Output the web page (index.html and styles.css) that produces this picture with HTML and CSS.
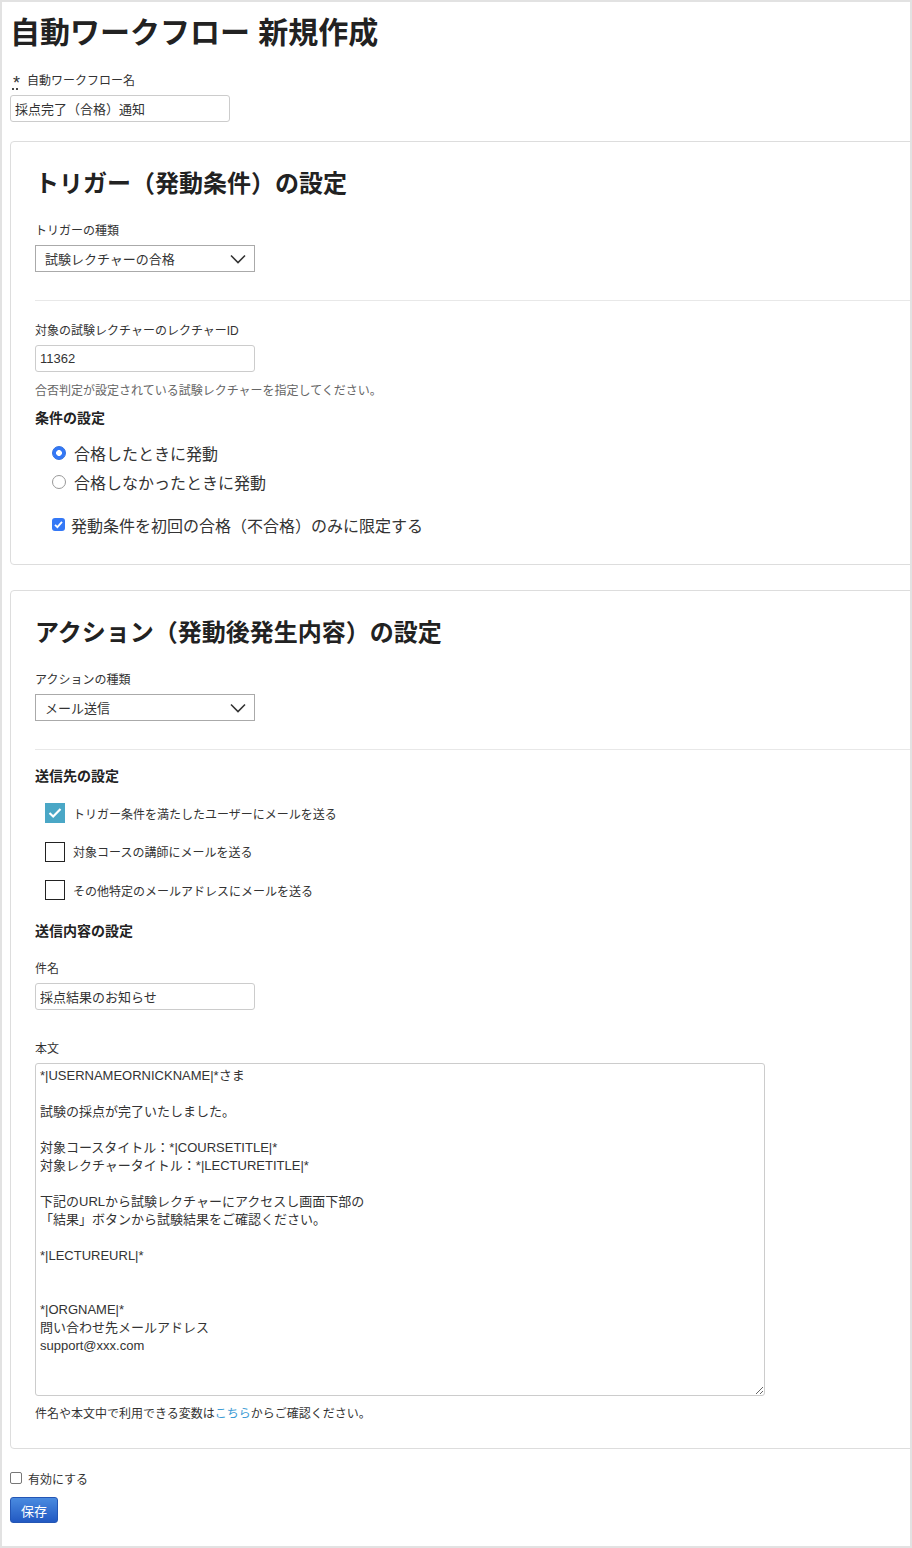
FILE: index.html
```html
<!DOCTYPE html>
<html lang="ja">
<head>
    <meta charset="UTF-8">
    <meta name="viewport" content="width=device-width, initial-scale=1.0">
    <title>自動ワークフロー 新規作成</title>
    <link rel="stylesheet" href="styles.css">
</head>
<body>
    <div class="page">
        <h1 class="title">自動ワークフロー 新規作成</h1>

        <label class="label top-label"><abbr class="req" title="必須">*</abbr>自動ワークフロー名</label>
        <input class="input name-input" type="text" value="採点完了（合格）通知">

        <!-- trigger -->
        <section class="card">
            <h2 class="card-title">トリガー（発動条件）の設定</h2>
            <label class="label after-title">トリガーの種類</label>
            <div class="select">
                <span>試験レクチャーの合格</span>
                <svg width="16" height="10" viewBox="0 0 16 10"><polyline points="1,1.5 8,8.5 15,1.5" fill="none" stroke="#333" stroke-width="1.6"/></svg>
            </div>
            <div class="divider"></div>

            <label class="label after-divider">対象の試験レクチャーのレクチャーID</label>
            <input class="input" type="text" value="11362">
            <p class="help">合否判定が設定されている試験レクチャーを指定してください。</p>
            <h3 class="sub-title cond-title">条件の設定</h3>

            <div class="radios">
                <div class="choice"><span class="radio on"></span>合格したときに発動</div>
                <div class="choice"><span class="radio"></span>合格しなかったときに発動</div>
            </div>
            <div class="choice first-only">
                <span class="mac-check">
                    <svg width="13" height="13" viewBox="0 0 13 13"><polyline points="3,6.8 5.4,9.2 10,3.8" fill="none" stroke="#fff" stroke-width="1.8"/></svg>
                </span>
                発動条件を初回の合格（不合格）のみに限定する
            </div>
        </section>

        <!-- action -->
        <section class="card">
            <h2 class="card-title">アクション（発動後発生内容）の設定</h2>
            <label class="label after-title">アクションの種類</label>
            <div class="select">
                <span>メール送信</span>
                <svg width="16" height="10" viewBox="0 0 16 10"><polyline points="1,1.5 8,8.5 15,1.5" fill="none" stroke="#333" stroke-width="1.6"/></svg>
            </div>
            <div class="divider"></div>

            <h3 class="sub-title to-title">送信先の設定</h3>
            <div class="targets">
                <div class="target">
                    <span class="box checked">
                        <svg width="20" height="20" viewBox="0 0 20 20"><polyline points="4.5,10 8.2,13.5 15.5,6" fill="none" stroke="#fff" stroke-width="2.2"/></svg>
                    </span>
                    トリガー条件を満たしたユーザーにメールを送る
                </div>
                <div class="target"><span class="box"></span>対象コースの講師にメールを送る</div>
                <div class="target"><span class="box"></span>その他特定のメールアドレスにメールを送る</div>
            </div>

            <h3 class="sub-title content-title">送信内容の設定</h3>
            <label class="label subject-label">件名</label>
            <input class="input" type="text" value="採点結果のお知らせ">

            <label class="label body-label">本文</label>
            <textarea class="body-text">*|USERNAMEORNICKNAME|*さま

試験の採点が完了いたしました。

対象コースタイトル：*|COURSETITLE|*
対象レクチャータイトル：*|LECTURETITLE|*

下記のURLから試験レクチャーにアクセスし画面下部の
「結果」ボタンから試験結果をご確認ください。

*|LECTUREURL|*


*|ORGNAME|*
問い合わせ先メールアドレス
support@xxx.com</textarea>
            <p class="help note">件名や本文中で利用できる変数は<a href="#">こちら</a>からご確認ください。</p>
        </section>

        <div class="enable"><span class="small-box"></span>有効にする</div>
        <button class="save">保存</button>
    </div>
</body>
</html>
```

FILE: styles.css
```css
body {
    margin: 0;
    font-family: "Liberation Sans", "Noto Sans CJK JP", sans-serif;
    color: #333;
    background-color: #fff;
}

.page {
    box-sizing: border-box;
    width: 912px;
    height: 1548px;
    border: 2px solid #e2e2e2;
    padding: 13px 0 0 8px;
    overflow: hidden;
}

.title {
    margin: 0;
    font-size: 30px;
    line-height: 36px;
    font-weight: bold;
    color: #222;
}

.label {
    display: block;
    font-size: 12px;
    line-height: 18px;
    color: #333;
}

.top-label {
    margin-top: 21px;
}

.req {
    display: inline-block;
    width: 9px;
    margin: 0 6px 0 2px;
    font-size: 18px;
    line-height: 12px;
    vertical-align: -4px;
    text-align: center;
    text-decoration: underline dotted;
    text-underline-offset: 0px;
}

.input {
    display: block;
    box-sizing: border-box;
    width: 220px;
    height: 27px;
    margin: 5px 0 0;
    padding: 0 4px;
    border: 1px solid #ccc;
    border-radius: 3px;
    font-family: "Liberation Sans", "Noto Sans CJK JP", sans-serif;
    font-size: 13px;
    color: #333;
}

.name-input {
    margin-bottom: 19px;
}

.card {
    margin-right: -10px;
    border: 1px solid #ddd;
    border-radius: 4px;
    padding: 27px 0 25px 24px;
}

.card + .card {
    margin-top: 25px;
}

.card-title {
    margin: 0;
    font-size: 24px;
    line-height: 30px;
    font-weight: bold;
    color: #222;
}

.after-title {
    margin-top: 23px;
}

.select {
    box-sizing: border-box;
    width: 220px;
    height: 27px;
    margin-top: 5px;
    padding: 0 8px 0 9px;
    border: 1px solid #aaa;
    display: flex;
    align-items: center;
    justify-content: space-between;
    font-size: 13px;
    color: #333;
}

.divider {
    margin-top: 28px;
    border-top: 1px solid #e8e8e8;
}

.after-divider {
    margin-top: 21px;
}

.help {
    margin: 10px 0 0;
    font-size: 12px;
    line-height: 18px;
    color: #666;
}

.sub-title {
    margin: 0;
    font-size: 14px;
    line-height: 18px;
    font-weight: bold;
    color: #222;
}

.cond-title {
    margin-top: 9px;
}

.radios {
    margin-top: 11px;
}

.choice {
    display: flex;
    align-items: center;
    height: 29px;
    font-size: 16px;
    color: #333;
    padding-left: 17px;
}

.radio {
    box-sizing: border-box;
    width: 14px;
    height: 14px;
    margin-right: 8px;
    border-radius: 50%;
    border: 1px solid #999;
    background-color: #fff;
}

.radio.on {
    border-color: #2f6fe0;
    background: radial-gradient(circle, #fff 0 2.6px, #3478f6 3.2px);
}

.first-only {
    margin-top: 14px;
}

.mac-check {
    width: 13px;
    height: 13px;
    margin-right: 6px;
    border-radius: 3px;
    background-color: #3478f6;
    display: flex;
}

.to-title {
    margin-top: 17px;
}

.targets {
    margin-top: 18px;
}

.target {
    display: flex;
    align-items: center;
    height: 20px;
    padding-left: 10px;
    font-size: 12px;
    color: #333;
}

.target + .target {
    margin-top: 18.5px;
}

.box {
    box-sizing: border-box;
    width: 20px;
    height: 20px;
    margin-right: 8px;
    border: 1px solid #222;
    background-color: #fff;
    display: flex;
}

.box.checked {
    border: none;
    background-color: #4aa7c6;
}

.content-title {
    margin-top: 22px;
}

.subject-label {
    margin-top: 20px;
}

.body-label {
    margin-top: 30px;
}

.body-text {
    display: block;
    box-sizing: border-box;
    width: 730px;
    height: 333px;
    margin-top: 5px;
    padding: 3px 4px;
    border: 1px solid #ccc;
    border-radius: 3px;
    font-family: "Liberation Sans", "Noto Sans CJK JP", sans-serif;
    font-size: 13px;
    line-height: 18px;
    color: #333;
}

.note {
    margin-top: 9px;
    color: #333;
}

.note a {
    color: #3d9bd4;
    text-decoration: none;
}

.enable {
    display: flex;
    align-items: center;
    height: 18px;
    margin-top: 20px;
    font-size: 12px;
    color: #333;
}

.small-box {
    box-sizing: border-box;
    width: 12px;
    height: 12px;
    margin-right: 6px;
    border: 1px solid #777;
    border-radius: 2px;
    background-color: #fff;
}

.save {
    display: block;
    height: 26px;
    margin-top: 10px;
    padding: 0 10px;
    border: 1px solid #2456b4;
    border-radius: 3px;
    background: linear-gradient(#4a8be0, #2259c2);
    color: #fff;
    font-family: "Liberation Sans", "Noto Sans CJK JP", sans-serif;
    font-size: 13px;
    cursor: pointer;
}
```
